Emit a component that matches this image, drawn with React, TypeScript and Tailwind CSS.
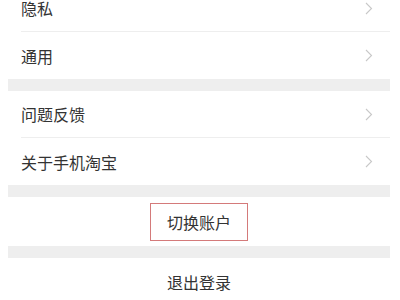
const font = { fontFamily: '"Noto Sans CJK SC", "Noto Sans", sans-serif' }

function Chevron() {
  return (
    <svg width="8" height="13" viewBox="0 0 8 13" className="shrink-0">
      <path d="M1 1 L6.5 6.5 L1 12" fill="none" stroke="#c8c8c8" strokeWidth="1.1" />
    </svg>
  )
}

function Row({ label, last }: { label: string; last?: boolean }) {
  return (
    <div className="pl-[13px]">
      <div
        className={`flex h-[47px] items-center justify-between pr-[17px] ${last ? '' : 'border-b border-[#eeeeee]'}`}
      >
        <span className="text-[16px] text-[#333333]">{label}</span>
        <Chevron />
      </div>
    </div>
  )
}

function Gap() {
  return <div className="h-[12px] bg-[#eeeeee]" />
}

export default function App() {
  return (
    <div className="h-[300px] w-[400px] overflow-hidden bg-white" style={font}>
      <div className="-mt-[15px] ml-[8px] mr-[10px]">
        <Row label="隐私" />
        <Row label="通用" last />
        <Gap />
        <Row label="问题反馈" />
        <Row label="关于手机淘宝" last />
        <Gap />
        <div className="flex h-[49px] items-center justify-center">
          <div className="border-[1.5px] border-[#d47a7a] px-[16px] py-[6px] text-[16px] text-[#333333]">
            切换账户
          </div>
        </div>
        <Gap />
        <div className="flex h-[47px] items-center justify-center text-[16px] text-[#333333]">
          退出登录
        </div>
      </div>
    </div>
  )
}
